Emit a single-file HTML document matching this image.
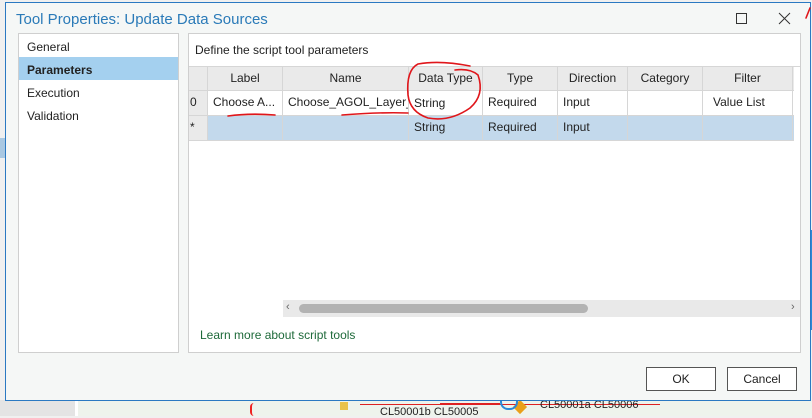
<!DOCTYPE html>
<html><head><meta charset="utf-8"><style>
*{box-sizing:border-box;margin:0;padding:0}
body{width:812px;height:416px;overflow:hidden;position:relative;background:#f0f0f0;font-family:"Liberation Sans",sans-serif;font-size:12px;color:#222}
.abs{position:absolute}
.dlg{left:5px;top:2px;width:806px;height:399px;background:#f5f7f6;border:1px solid #2b79c2}
.title{left:10px;top:8px;font-size:15px;color:#2a7ab8}
.panel{background:#fff;border:1px solid #cfcfcf}
.cell{position:absolute;height:100%;border-right:1px solid #d6d6d6;text-align:center;line-height:23px;white-space:nowrap;overflow:hidden}
.row{position:absolute;left:0;width:605px}
.l{text-align:left;padding-left:5px}
.btn{background:#fff;border:1px solid #555;text-align:center;line-height:22px;font-size:12px}
</style></head><body>
<div class="abs" style="left:75px;top:400px;width:737px;height:16px;background:#eef3ec"></div>
<div class="abs" style="left:0;top:400px;width:75px;height:16px;background:#e4e4e4"></div>
<div class="abs" style="left:75px;top:400px;width:3px;height:16px;background:#fff"></div>
<div class="abs" style="left:0;top:138px;width:5px;height:20px;background:#a9c8e2"></div>
<div class="abs" style="left:360px;top:404px;width:300px;height:1px;background:#d22"></div>
<div class="abs" style="left:340px;top:402px;width:8px;height:8px;background:#e9c24a"></div>
<div class="abs" style="left:515px;top:402px;width:10px;height:10px;background:#e9a01a;transform:rotate(45deg)"></div>
<div class="abs" style="left:500px;top:400px;width:18px;height:10px;border:2px solid #2a8ad8;border-top:none;border-radius:0 0 8px 8px"></div>
<div class="abs" style="left:540px;top:399px;font-size:11px;color:#222">CL50001a CL50006</div>
<div class="abs" style="left:380px;top:406px;font-size:11px;color:#222">CL50001b CL50005</div>
<div class="abs" style="left:440px;top:403px;width:60px;height:2px;background:#d22"></div>
<div class="abs" style="left:250px;top:403px;width:8px;height:13px;border-left:2px solid #e22;border-radius:8px"></div>
<div class="abs" style="left:809px;top:230px;width:3px;height:100px;background:#2a8ad8"></div>

<div class="abs dlg">
 <div class="abs title">Tool Properties: Update Data Sources</div>
 <svg class="abs" style="left:728px;top:9px" width="60" height="14" fill="none" stroke="#333" stroke-width="1">
  <rect x="2.5" y="1.5" width="10" height="10"/>
  <path d="M45 1 L56 12 M56 1 L45 12"/>
 </svg>
 <div class="abs panel" style="left:12px;top:30px;width:161px;height:320px">
  <div class="abs" style="left:8px;top:6px;font-size:12px">General</div>
  <div class="abs" style="left:0;top:23px;width:159px;height:23px;background:#a4d0ef"></div>
  <div class="abs" style="left:8px;top:29px;font-weight:bold">Parameters</div>
  <div class="abs" style="left:8px;top:52px">Execution</div>
  <div class="abs" style="left:8px;top:75px">Validation</div>
 </div>
 <div class="abs panel" style="left:182px;top:30px;width:613px;height:320px">
  <div class="abs" style="left:6px;top:9px">Define the script tool parameters</div>
  <div class="abs" style="left:0;top:32px;width:611px;height:1px;background:#d6d6d6"></div>
  <div class="row" style="top:33px;height:24px;background:#eaeaea;border-bottom:1px solid #d6d6d6">
   <div class="cell" style="left:0;width:19px"></div>
   <div class="cell" style="left:19px;width:75px">Label</div>
   <div class="cell" style="left:94px;width:126px">Name</div>
   <div class="cell" style="left:220px;width:74px">Data Type</div>
   <div class="cell" style="left:294px;width:75px">Type</div>
   <div class="cell" style="left:369px;width:70px">Direction</div>
   <div class="cell" style="left:439px;width:75px">Category</div>
   <div class="cell" style="left:514px;width:90px">Filter</div>
  </div>
  <div class="row" style="top:57px;height:25px;border-bottom:1px solid #d6d6d6">
   <div class="cell l" style="left:0;width:19px;background:#eaeaea;padding-left:1px">0</div>
   <div class="cell l" style="left:19px;width:75px">Choose A...</div>
   <div class="cell l" style="left:94px;width:126px">Choose_AGOL_Layer_</div>
   <div class="cell l" style="left:220px;width:74px;padding-top:1px">String</div>
   <div class="cell l" style="left:294px;width:75px">Required</div>
   <div class="cell l" style="left:369px;width:70px">Input</div>
   <div class="cell l" style="left:439px;width:75px"></div>
   <div class="cell l" style="left:514px;width:90px;padding-left:10px">Value List</div>
  </div>
  <div class="row" style="top:82px;height:25px;background:#c3d9ec;border-bottom:1px solid #d6d6d6">
   <div class="cell l" style="left:0;width:19px;background:#eaeaea;padding-left:1px">*</div>
   <div class="cell l" style="left:19px;width:75px"></div>
   <div class="cell l" style="left:94px;width:126px"></div>
   <div class="cell l" style="left:220px;width:74px">String</div>
   <div class="cell l" style="left:294px;width:75px">Required</div>
   <div class="cell l" style="left:369px;width:70px">Input</div>
   <div class="cell l" style="left:439px;width:75px"></div>
   <div class="cell l" style="left:514px;width:90px"></div>
  </div>
  <div class="abs" style="left:94px;top:266px;width:517px;height:17px;background:#e9e9e9"></div>
  <div class="abs" style="left:97px;top:267px;font-size:11px;color:#666">‹</div>
  <div class="abs" style="left:602px;top:267px;font-size:11px;color:#666">›</div>
  <div class="abs" style="left:110px;top:270px;width:289px;height:9px;border-radius:5px;background:#b3b3b3"></div>
  <div class="abs" style="left:11px;top:294px;color:#1e6a3a">Learn more about script tools</div>
 </div>
 <div class="abs btn" style="left:640px;top:364px;width:70px;height:24px">OK</div>
 <div class="abs btn" style="left:721px;top:364px;width:70px;height:24px">Cancel</div>
</div>
<svg class="abs" style="left:0;top:0" width="812" height="416" fill="none" stroke="#e0161b" stroke-width="1.6" stroke-linecap="round">
 <path d="M228 116 Q250 113 275 115"/>
 <path d="M342 115 Q380 112 408 113"/>
 <path d="M478 75 Q470 68 455 70 M478 75 Q485 95 470 108 Q450 122 428 118 Q410 112 408 95 Q406 70 418 64 Q440 60 470 66"/>
 <path d="M810 8 L806 18"/>
</svg>
</body></html>
